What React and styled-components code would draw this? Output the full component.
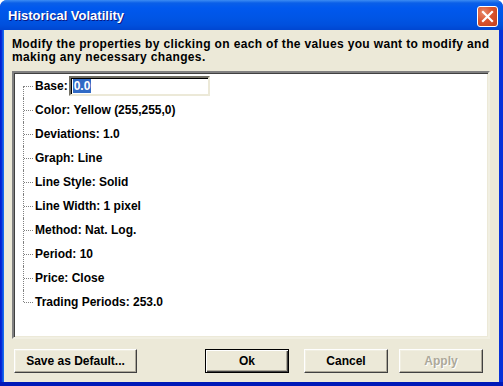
import React from "react";
import styled, { createGlobalStyle } from "styled-components";

const GlobalStyle = createGlobalStyle`
  html, body {
    margin: 0;
    padding: 0;
    background: #ffffff;
  }
  body {
    font-family: "Liberation Sans", Arial, sans-serif;
  }
`;

const items = [
  { label: "Base:", value: "0.0", editing: true },
  { label: "Color: Yellow (255,255,0)" },
  { label: "Deviations: 1.0" },
  { label: "Graph: Line" },
  { label: "Line Style: Solid" },
  { label: "Line Width: 1 pixel" },
  { label: "Method: Nat. Log." },
  { label: "Period: 10" },
  { label: "Price: Close" },
  { label: "Trading Periods: 253.0" },
];

const App = () => {
  return (
    <>
      <GlobalStyle />
      <Window>
        <TitleBar>
          <Title>Historical Volatility</Title>
          <CloseButton aria-label="Close">
            <svg width="13" height="13" viewBox="0 0 13 13">
              <path
                d="M2 2 L11 11 M11 2 L2 11"
                stroke="#ffffff"
                strokeWidth="2.2"
                strokeLinecap="square"
              />
            </svg>
          </CloseButton>
        </TitleBar>

        <Body>
          <Intro>
            Modify the properties by clicking on each of the values you want to modify and
            making any necessary changes.
          </Intro>

          <TreePanel>
            <Tree>
              {items.map((item, i) => (
                <TreeItem key={item.label} $last={i === items.length - 1}>
                  <span>{item.label}</span>
                  {item.editing && (
                    <EditBox>
                      <Selected>{item.value}</Selected>
                    </EditBox>
                  )}
                </TreeItem>
              ))}
            </Tree>
          </TreePanel>

          <ButtonRow>
            <Button $width={123}>Save as Default...</Button>
            <Spacer />
            <Button $default>Ok</Button>
            <Button $gap={15}>Cancel</Button>
            <Button $gap={11} disabled>
              Apply
            </Button>
          </ButtonRow>
        </Body>
      </Window>
    </>
  );
};

const Window = styled.div`
  width: 503px;
  height: 386px;
  box-sizing: border-box;
  display: flex;
  flex-direction: column;
  border-radius: 7px 7px 0 0;
  background: linear-gradient(to right, #0019cf 0, #0831d9 2px, #166aee 3px, #0831d9 100%);
  border-bottom: 4px solid #0019b8;
  overflow: hidden;
`;

const TitleBar = styled.div`
  height: 30px;
  flex: none;
  display: flex;
  align-items: center;
  padding: 0 5px 0 8px;
  background: linear-gradient(
    to bottom,
    #3c8cf3 0,
    #0a5fe8 3px,
    #0058ee 8px,
    #0055e5 18px,
    #0050dd 25px,
    #0046d1 30px
  );
`;

const Title = styled.div`
  flex: 1;
  color: #ffffff;
  font-weight: bold;
  font-size: 13px;
  text-shadow: 1px 1px 0 #0a1883;
  padding-top: 1px;
`;

const CloseButton = styled.div`
  width: 21px;
  height: 21px;
  box-sizing: border-box;
  margin-top: 2px;
  border: 1px solid #ffffff;
  border-radius: 3px;
  display: flex;
  align-items: center;
  justify-content: center;
  background: radial-gradient(circle at 30% 30%, #e88a6a 0, #d9542f 45%, #c1401c 100%);
`;

const Body = styled.div`
  flex: 1;
  min-height: 0;
  margin: 0 4px;
  background: #ece9d8;
  display: flex;
  flex-direction: column;
  padding: 8px 9px 0 8px;
`;

const Intro = styled.p`
  margin: 0;
  font-size: 12px;
  font-weight: bold;
  line-height: 13px;
  color: #000000;
  letter-spacing: 0.35px;
`;

const TreePanel = styled.div`
  margin-top: 7px;
  height: 268px;
  flex: none;
  box-sizing: border-box;
  background: #ffffff;
  border-style: solid;
  border-width: 2px;
  border-color: #808080 #f1efe2 #f1efe2 #808080;
  box-shadow: inset 1px 1px 0 #404040, inset -1px -1px 0 #ece9d8;
`;

const Tree = styled.ul`
  list-style: none;
  margin: 0;
  padding: 1px 0 0 0;
`;

const TreeItem = styled.li`
  position: relative;
  height: 24px;
  display: flex;
  align-items: center;
  padding-left: 21px;
  font-size: 12px;
  font-weight: bold;
  color: #000000;

  &::before {
    content: "";
    position: absolute;
    left: 9px;
    top: 0;
    height: ${(p) => (p.$last ? "12px" : "24px")};
    border-left: 1px dotted #808080;
  }

  &::after {
    content: "";
    position: absolute;
    left: 10px;
    top: 12px;
    width: 9px;
    border-top: 1px dotted #808080;
  }

  &:first-child::before {
    top: 12px;
    height: 12px;
  }
`;

const EditBox = styled.div`
  width: 141px;
  height: 20px;
  box-sizing: border-box;
  margin-left: 1px;
  border-style: solid;
  border-width: 2px;
  border-color: #716f64 #ece9d8 #ece9d8 #716f64;
  box-shadow: inset 1px 1px 0 #000000;
  background: #ffffff;
  display: flex;
  align-items: center;
  padding-left: 2px;
`;

const Selected = styled.span`
  background: #316ac5;
  color: #ffffff;
  font-weight: bold;
  font-size: 12px;
  line-height: 14px;
  padding: 0 1px;
`;

const ButtonRow = styled.div`
  display: flex;
  align-items: center;
  margin-top: 10px;
  padding: 0 7px 0 2px;
`;

const Spacer = styled.div`
  flex: 1;
`;

const Button = styled.button`
  width: ${(p) => (p.$width ? `${p.$width}px` : "84px")};
  margin-left: ${(p) => (p.$gap ? `${p.$gap}px` : "0")};
  height: 24px;
  box-sizing: border-box;
  font-family: "Liberation Sans", Arial, sans-serif;
  font-size: 12px;
  font-weight: bold;
  color: #000000;
  background: #ece9d8;
  padding: 0;
  border-style: solid;
  border-width: 1px;
  border-color: ${(p) =>
    p.$default ? "#000000" : "#ffffff #404040 #404040 #ffffff"};
  box-shadow: ${(p) =>
    p.$default
      ? "inset 1px 1px 0 #ffffff, inset -1px -1px 0 #404040, inset -2px -2px 0 #aca899"
      : "inset -1px -1px 0 #aca899, inset 1px 1px 0 #f1efe2"};

  &:disabled {
    color: #aca899;
    text-shadow: 1px 1px 0 #ffffff;
  }
`;

export default App;
